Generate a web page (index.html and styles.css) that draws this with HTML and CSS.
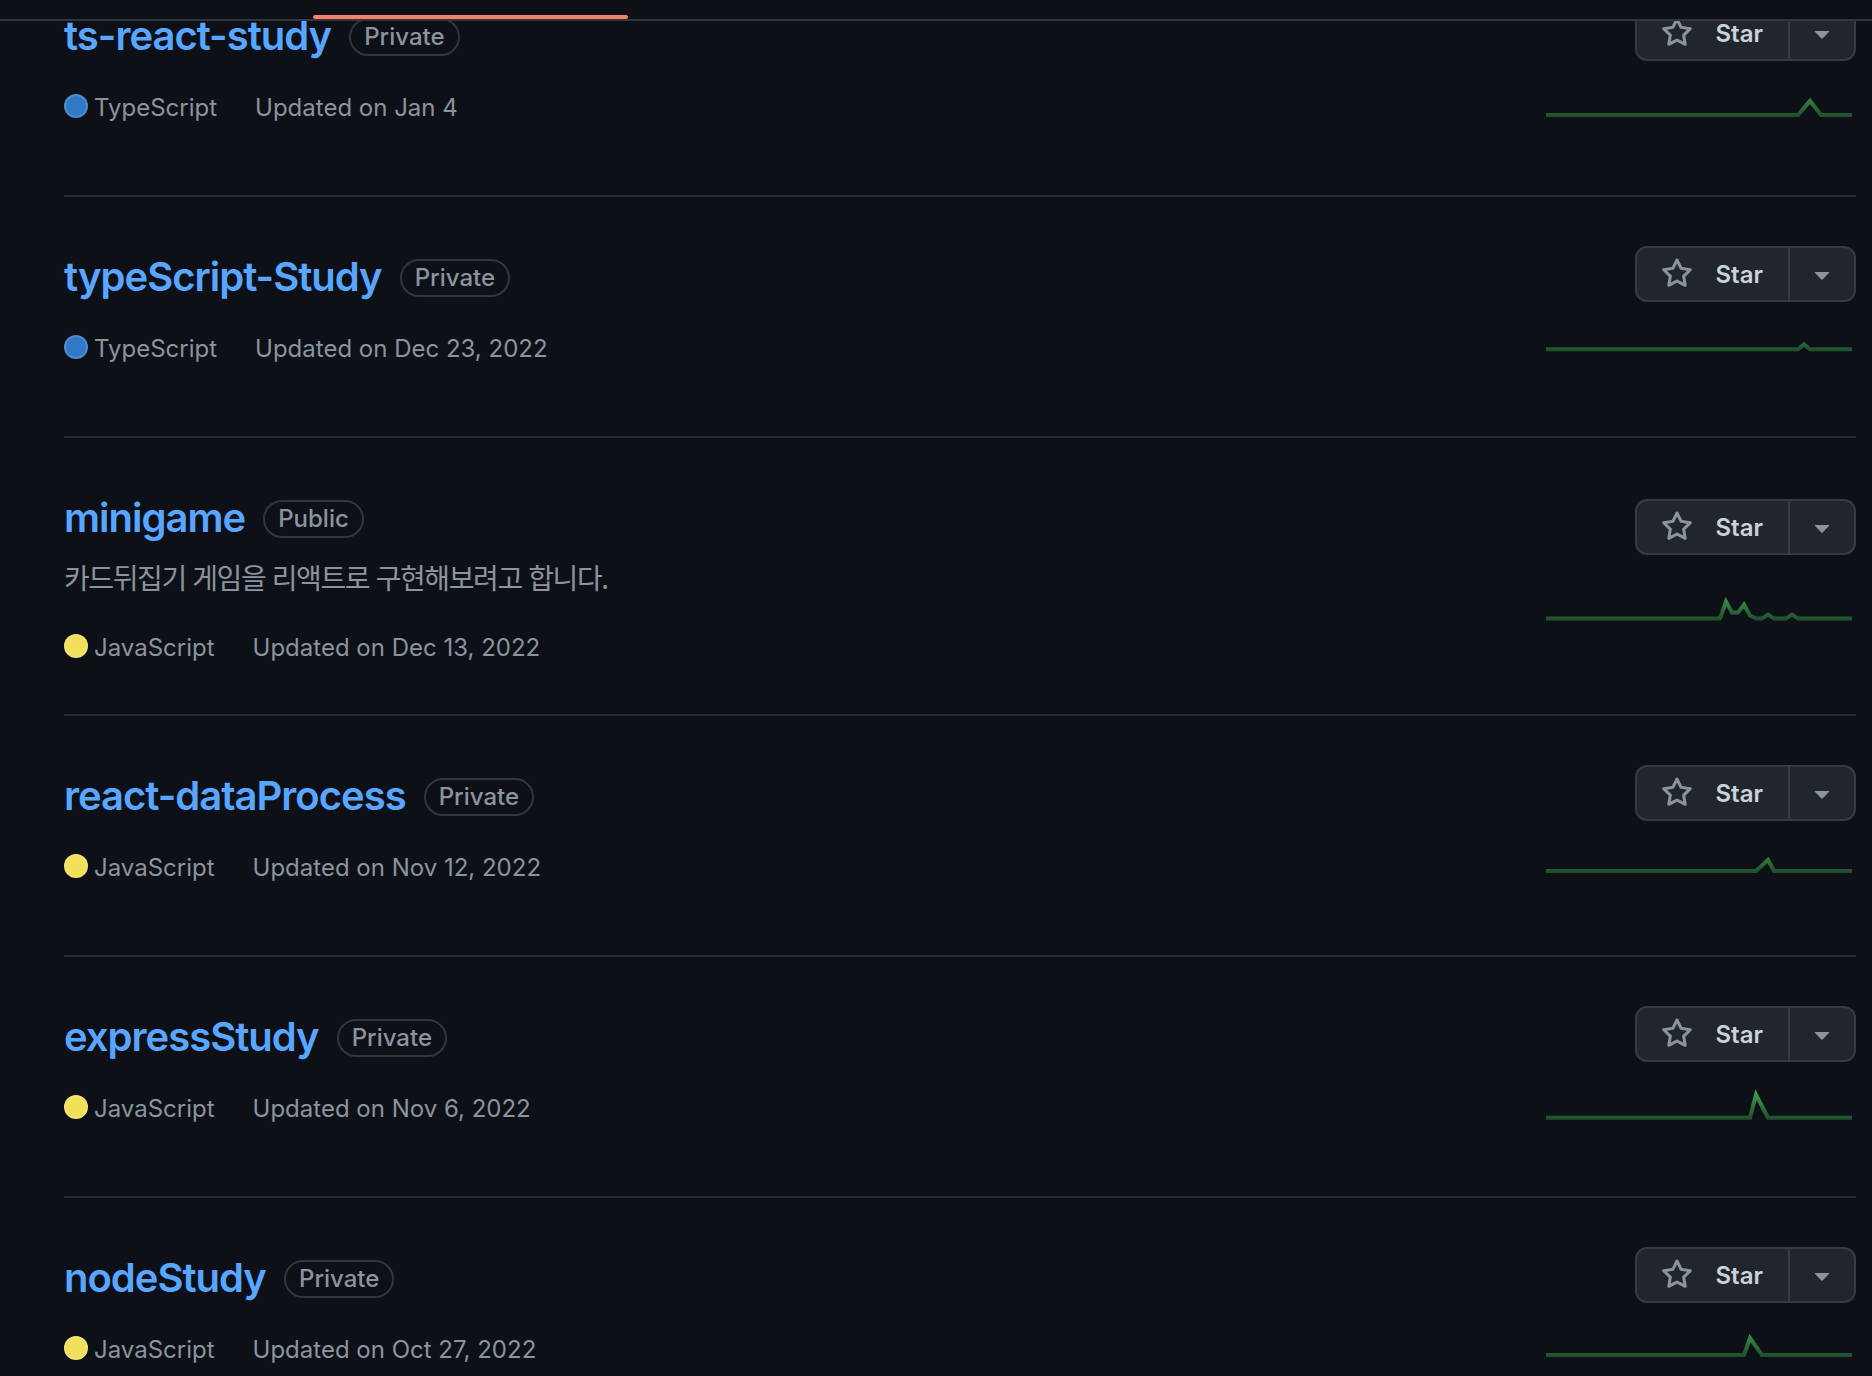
FILE: index.html
```html
<!DOCTYPE html>
<html lang="ko">
<head>
<meta charset="utf-8">
<title>Repositories</title>
<link rel="stylesheet" href="styles.css">
</head>
<body>
<header class="tabbar">
  <nav class="tabs"><span class="tab-selected" title="Repositories"></span></nav>
</header>
<main class="page">
  <ul class="repo-list">
    <li class="repo">
      <div class="repo-info">
        <div class="repo-head"><h3 class="repo-name"><a href="#">ts-react-study</a></h3> <span class="label">Private</span></div>
        <div class="repo-meta"><span class="lang"><span class="lang-dot ts"></span><span>TypeScript</span></span><span>Updated on Jan 4</span></div>
      </div>
      <div class="repo-side">
        <div class="star-group">
          <button class="star-btn"><svg class="star-icon" viewBox="0 0 16 16" width="32" height="32"><path d="M8 .25a.75.75 0 0 1 .673.418l1.882 3.815 4.21.612a.75.75 0 0 1 .416 1.279l-3.046 2.97.719 4.192a.751.751 0 0 1-1.088.791L8 12.347l-3.766 1.98a.75.75 0 0 1-1.088-.79l.72-4.194L.818 6.374a.75.75 0 0 1 .416-1.28l4.21-.611L7.327.668A.75.75 0 0 1 8 .25Zm0 2.445L6.615 5.5a.75.75 0 0 1-.564.41l-3.097.45 2.24 2.184a.75.75 0 0 1 .216.664l-.528 3.084 2.769-1.456a.75.75 0 0 1 .698 0l2.77 1.456-.53-3.084a.75.75 0 0 1 .216-.664l2.24-2.183-3.096-.45a.75.75 0 0 1-.564-.41L8 2.694Z"/></svg><span>Star</span></button>
          <button class="star-menu"><svg class="caret" viewBox="0 0 16 16" width="32" height="32"><path d="m4.427 7.427 3.396 3.396a.25.25 0 0 0 .354 0l3.396-3.396A.25.25 0 0 0 11.396 7H4.604a.25.25 0 0 0-.177.427Z"/></svg></button>
        </div>
        <svg class="spark" viewBox="0 0 310 86" width="310" height="86"><defs><linearGradient id="sg1" gradientUnits="userSpaceOnUse" x1="0" y1="56" x2="0" y2="26"><stop offset="0" stop-color="#1f4c2c"/><stop offset="0.5" stop-color="#2f7a3c"/><stop offset="1" stop-color="#46a250"/></linearGradient></defs><polyline points="0,54 252,54 264,40 275,54 306,54" stroke="url(#sg1)"/></svg>
      </div>
    </li>
    <li class="repo">
      <div class="repo-info">
        <div class="repo-head"><h3 class="repo-name"><a href="#">typeScript-Study</a></h3> <span class="label">Private</span></div>
        <div class="repo-meta"><span class="lang"><span class="lang-dot ts"></span><span>TypeScript</span></span><span>Updated on Dec 23, 2022</span></div>
      </div>
      <div class="repo-side">
        <div class="star-group">
          <button class="star-btn"><svg class="star-icon" viewBox="0 0 16 16" width="32" height="32"><path d="M8 .25a.75.75 0 0 1 .673.418l1.882 3.815 4.21.612a.75.75 0 0 1 .416 1.279l-3.046 2.97.719 4.192a.751.751 0 0 1-1.088.791L8 12.347l-3.766 1.98a.75.75 0 0 1-1.088-.79l.72-4.194L.818 6.374a.75.75 0 0 1 .416-1.28l4.21-.611L7.327.668A.75.75 0 0 1 8 .25Zm0 2.445L6.615 5.5a.75.75 0 0 1-.564.41l-3.097.45 2.24 2.184a.75.75 0 0 1 .216.664l-.528 3.084 2.769-1.456a.75.75 0 0 1 .698 0l2.77 1.456-.53-3.084a.75.75 0 0 1 .216-.664l2.24-2.183-3.096-.45a.75.75 0 0 1-.564-.41L8 2.694Z"/></svg><span>Star</span></button>
          <button class="star-menu"><svg class="caret" viewBox="0 0 16 16" width="32" height="32"><path d="m4.427 7.427 3.396 3.396a.25.25 0 0 0 .354 0l3.396-3.396A.25.25 0 0 0 11.396 7H4.604a.25.25 0 0 0-.177.427Z"/></svg></button>
        </div>
        <svg class="spark" viewBox="0 0 310 86" width="310" height="86"><defs><linearGradient id="sg2" gradientUnits="userSpaceOnUse" x1="0" y1="49.3" x2="0" y2="19.3"><stop offset="0" stop-color="#1f4c2c"/><stop offset="0.5" stop-color="#2f7a3c"/><stop offset="1" stop-color="#46a250"/></linearGradient></defs><polyline points="0,47.3 252,47.3 258,42.3 264,47.3 306,47.3" stroke="url(#sg2)"/></svg>
      </div>
    </li>
    <li class="repo">
      <div class="repo-info">
        <div class="repo-head"><h3 class="repo-name"><a href="#">minigame</a></h3> <span class="label">Public</span></div>
        <p class="repo-desc">카드뒤집기 게임을 리액트로 구현해보려고 합니다.</p>
        <div class="repo-meta"><span class="lang"><span class="lang-dot js"></span><span>JavaScript</span></span><span>Updated on Dec 13, 2022</span></div>
      </div>
      <div class="repo-side">
        <div class="star-group">
          <button class="star-btn"><svg class="star-icon" viewBox="0 0 16 16" width="32" height="32"><path d="M8 .25a.75.75 0 0 1 .673.418l1.882 3.815 4.21.612a.75.75 0 0 1 .416 1.279l-3.046 2.97.719 4.192a.751.751 0 0 1-1.088.791L8 12.347l-3.766 1.98a.75.75 0 0 1-1.088-.79l.72-4.194L.818 6.374a.75.75 0 0 1 .416-1.28l4.21-.611L7.327.668A.75.75 0 0 1 8 .25Zm0 2.445L6.615 5.5a.75.75 0 0 1-.564.41l-3.097.45 2.24 2.184a.75.75 0 0 1 .216.664l-.528 3.084 2.769-1.456a.75.75 0 0 1 .698 0l2.77 1.456-.53-3.084a.75.75 0 0 1 .216-.664l2.24-2.183-3.096-.45a.75.75 0 0 1-.564-.41L8 2.694Z"/></svg><span>Star</span></button>
          <button class="star-menu"><svg class="caret" viewBox="0 0 16 16" width="32" height="32"><path d="m4.427 7.427 3.396 3.396a.25.25 0 0 0 .354 0l3.396-3.396A.25.25 0 0 0 11.396 7H4.604a.25.25 0 0 0-.177.427Z"/></svg></button>
        </div>
        <svg class="spark" viewBox="0 0 310 86" width="310" height="86"><defs><linearGradient id="sg3" gradientUnits="userSpaceOnUse" x1="0" y1="52.6" x2="0" y2="22.6"><stop offset="0" stop-color="#1f4c2c"/><stop offset="0.5" stop-color="#2f7a3c"/><stop offset="1" stop-color="#46a250"/></linearGradient></defs><polyline points="0,50.6 174,50.6 180,33.6 186,44.6 192,44.6 198,36.6 204,47.6 210,50.6 216,50.6 222,46.6 228,50.6 240,50.6 246,46.6 252,50.6 306,50.6" stroke="url(#sg3)"/></svg>
      </div>
    </li>
    <li class="repo">
      <div class="repo-info">
        <div class="repo-head"><h3 class="repo-name"><a href="#">react-dataProcess</a></h3> <span class="label">Private</span></div>
        <div class="repo-meta"><span class="lang"><span class="lang-dot js"></span><span>JavaScript</span></span><span>Updated on Nov 12, 2022</span></div>
      </div>
      <div class="repo-side">
        <div class="star-group">
          <button class="star-btn"><svg class="star-icon" viewBox="0 0 16 16" width="32" height="32"><path d="M8 .25a.75.75 0 0 1 .673.418l1.882 3.815 4.21.612a.75.75 0 0 1 .416 1.279l-3.046 2.97.719 4.192a.751.751 0 0 1-1.088.791L8 12.347l-3.766 1.98a.75.75 0 0 1-1.088-.79l.72-4.194L.818 6.374a.75.75 0 0 1 .416-1.28l4.21-.611L7.327.668A.75.75 0 0 1 8 .25Zm0 2.445L6.615 5.5a.75.75 0 0 1-.564.41l-3.097.45 2.24 2.184a.75.75 0 0 1 .216.664l-.528 3.084 2.769-1.456a.75.75 0 0 1 .698 0l2.77 1.456-.53-3.084a.75.75 0 0 1 .216-.664l2.24-2.183-3.096-.45a.75.75 0 0 1-.564-.41L8 2.694Z"/></svg><span>Star</span></button>
          <button class="star-menu"><svg class="caret" viewBox="0 0 16 16" width="32" height="32"><path d="m4.427 7.427 3.396 3.396a.25.25 0 0 0 .354 0l3.396-3.396A.25.25 0 0 0 11.396 7H4.604a.25.25 0 0 0-.177.427Z"/></svg></button>
        </div>
        <svg class="spark" viewBox="0 0 310 86" width="310" height="86"><defs><linearGradient id="sg4" gradientUnits="userSpaceOnUse" x1="0" y1="52" x2="0" y2="22"><stop offset="0" stop-color="#1f4c2c"/><stop offset="0.5" stop-color="#2f7a3c"/><stop offset="1" stop-color="#46a250"/></linearGradient></defs><polyline points="0,50 210,50 222,39 228,50 306,50" stroke="url(#sg4)"/></svg>
      </div>
    </li>
    <li class="repo">
      <div class="repo-info">
        <div class="repo-head"><h3 class="repo-name"><a href="#">expressStudy</a></h3> <span class="label">Private</span></div>
        <div class="repo-meta"><span class="lang"><span class="lang-dot js"></span><span>JavaScript</span></span><span>Updated on Nov 6, 2022</span></div>
      </div>
      <div class="repo-side">
        <div class="star-group">
          <button class="star-btn"><svg class="star-icon" viewBox="0 0 16 16" width="32" height="32"><path d="M8 .25a.75.75 0 0 1 .673.418l1.882 3.815 4.21.612a.75.75 0 0 1 .416 1.279l-3.046 2.97.719 4.192a.751.751 0 0 1-1.088.791L8 12.347l-3.766 1.98a.75.75 0 0 1-1.088-.79l.72-4.194L.818 6.374a.75.75 0 0 1 .416-1.28l4.21-.611L7.327.668A.75.75 0 0 1 8 .25Zm0 2.445L6.615 5.5a.75.75 0 0 1-.564.41l-3.097.45 2.24 2.184a.75.75 0 0 1 .216.664l-.528 3.084 2.769-1.456a.75.75 0 0 1 .698 0l2.77 1.456-.53-3.084a.75.75 0 0 1 .216-.664l2.24-2.183-3.096-.45a.75.75 0 0 1-.564-.41L8 2.694Z"/></svg><span>Star</span></button>
          <button class="star-menu"><svg class="caret" viewBox="0 0 16 16" width="32" height="32"><path d="m4.427 7.427 3.396 3.396a.25.25 0 0 0 .354 0l3.396-3.396A.25.25 0 0 0 11.396 7H4.604a.25.25 0 0 0-.177.427Z"/></svg></button>
        </div>
        <svg class="spark" viewBox="0 0 310 86" width="310" height="86"><defs><linearGradient id="sg5" gradientUnits="userSpaceOnUse" x1="0" y1="57.7" x2="0" y2="27.7"><stop offset="0" stop-color="#1f4c2c"/><stop offset="0.5" stop-color="#2f7a3c"/><stop offset="1" stop-color="#46a250"/></linearGradient></defs><polyline points="0,55.7 204,55.7 210,32.7 222,55.7 306,55.7" stroke="url(#sg5)"/></svg>
      </div>
    </li>
    <li class="repo">
      <div class="repo-info">
        <div class="repo-head"><h3 class="repo-name"><a href="#">nodeStudy</a></h3> <span class="label">Private</span></div>
        <div class="repo-meta"><span class="lang"><span class="lang-dot js"></span><span>JavaScript</span></span><span>Updated on Oct 27, 2022</span></div>
      </div>
      <div class="repo-side">
        <div class="star-group">
          <button class="star-btn"><svg class="star-icon" viewBox="0 0 16 16" width="32" height="32"><path d="M8 .25a.75.75 0 0 1 .673.418l1.882 3.815 4.21.612a.75.75 0 0 1 .416 1.279l-3.046 2.97.719 4.192a.751.751 0 0 1-1.088.791L8 12.347l-3.766 1.98a.75.75 0 0 1-1.088-.79l.72-4.194L.818 6.374a.75.75 0 0 1 .416-1.28l4.21-.611L7.327.668A.75.75 0 0 1 8 .25Zm0 2.445L6.615 5.5a.75.75 0 0 1-.564.41l-3.097.45 2.24 2.184a.75.75 0 0 1 .216.664l-.528 3.084 2.769-1.456a.75.75 0 0 1 .698 0l2.77 1.456-.53-3.084a.75.75 0 0 1 .216-.664l2.24-2.183-3.096-.45a.75.75 0 0 1-.564-.41L8 2.694Z"/></svg><span>Star</span></button>
          <button class="star-menu"><svg class="caret" viewBox="0 0 16 16" width="32" height="32"><path d="m4.427 7.427 3.396 3.396a.25.25 0 0 0 .354 0l3.396-3.396A.25.25 0 0 0 11.396 7H4.604a.25.25 0 0 0-.177.427Z"/></svg></button>
        </div>
        <svg class="spark" viewBox="0 0 310 86" width="310" height="86"><defs><linearGradient id="sg6" gradientUnits="userSpaceOnUse" x1="0" y1="54" x2="0" y2="24"><stop offset="0" stop-color="#1f4c2c"/><stop offset="0.5" stop-color="#2f7a3c"/><stop offset="1" stop-color="#46a250"/></linearGradient></defs><polyline points="0,52 198,52 204,35 216,52 306,52" stroke="url(#sg6)"/></svg>
      </div>
    </li>
  </ul>
</main>
</body>
</html>
```
FILE: styles.css
```css
* { box-sizing: border-box; }

html, body {
  margin: 0;
  background: #0d1117;
}

body {
  font-family: Inter, "Noto Sans CJK KR", "Liberation Sans", sans-serif;
  color: #c9d1d9;
  height: 1376px;
  overflow: hidden;
}

.tabbar {
  position: fixed;
  top: 0;
  left: 0;
  right: 0;
  height: 21px;
  background: #0d1117;
  border-bottom: 2px solid #30363d;
  z-index: 10;
}

.tabs {
  display: flex;
  align-items: flex-end;
  height: 100%;
  padding-left: 313px;
}

.tab-selected {
  width: 315px;
  height: 4px;
  border-radius: 6px;
  background: #f78166;
}

.page {
  padding: 0 16px 0 64px;
}

.repo-list {
  list-style: none;
  margin: -44px 0 0;
  padding: 0;
}

.repo {
  display: flex;
  justify-content: space-between;
  padding: 48px 0;
  border-bottom: 2px solid #262b31;
}

.repo-info {
  display: flex;
  flex-direction: column;
  flex: 1;
  min-width: 0;
  padding-top: 2px;
}

.repo-head {
  font-size: 40px;
  line-height: 60px;
  font-weight: 600;
  margin-bottom: 8px;
  white-space: nowrap;
}

.repo-name {
  display: inline;
  margin: 0;
  font: inherit;
  letter-spacing: -1px;
}

.repo-name a {
  color: #58a6ff;
  text-decoration: none;
}

.label {
  display: inline-block;
  vertical-align: middle;
  margin: 0 0 5px 8px;
  padding: 0 13px;
  border: 2px solid #30363d;
  border-radius: 2em;
  font-size: 24px;
  line-height: 34px;
  font-weight: 500;
  color: #8b949e;
}

.repo-desc {
  margin: 0 0 16px;
  font-family: "Noto Sans CJK KR", Inter, sans-serif;
  font-size: 28px;
  line-height: 42px;
  letter-spacing: -1.4px;
  color: #8b949e;
}

.repo-meta {
  display: flex;
  align-items: center;
  margin-top: 16px;
  font-size: 24px;
  line-height: 36px;
  color: #8b949e;
}

.lang {
  display: flex;
  align-items: flex-start;
  margin-right: 38px;
}

.lang-dot {
  width: 24px;
  height: 24px;
  margin: 4px 6px 0 0;
  border-radius: 50%;
  border: 2px solid rgba(255, 255, 255, 0.14);
}

.lang-dot.ts { background: #3178c6; }
.lang-dot.js { background: #f1e05a; }

.repo-side {
  display: flex;
  flex-direction: column;
  justify-content: space-evenly;
  align-items: flex-end;
  margin-left: 24px;
  padding-top: 1px;
}

.star-group {
  display: flex;
  height: 56px;
  border: 2px solid #363b42;
  border-radius: 12px;
  background: #21262d;
  overflow: hidden;
}

.star-btn,
.star-menu {
  display: flex;
  align-items: center;
  margin: 0;
  border: 0;
  background: transparent;
  font: inherit;
  color: #c9d1d9;
  cursor: pointer;
}

.star-btn {
  gap: 22px;
  padding: 0 25px 0 24px;
  font-size: 24px;
  font-weight: 600;
}

.star-menu {
  justify-content: center;
  width: 66px;
  padding: 0;
  border-left: 2px solid #363b42;
}

.star-icon,
.caret {
  display: block;
  fill: #8b949e;
}

.spark {
  display: block;
  width: 310px;
  height: 86px;
}

.spark polyline {
  fill: none;
  stroke-width: 4;
  stroke-linejoin: miter;
}
```
